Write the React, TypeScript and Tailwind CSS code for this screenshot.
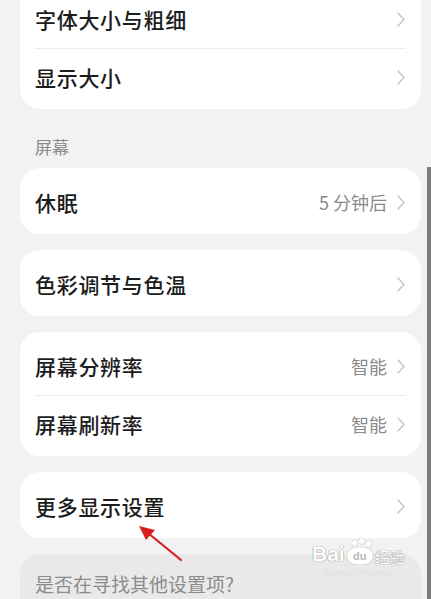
import React from 'react';

type Row = { label: string; value?: string };

const Chevron = () => (
  <svg width="8" height="15" viewBox="0 0 8 15" className="shrink-0">
    <path d="M1 1 L7 7.5 L1 14" fill="none" stroke="#c2c4c4" strokeWidth="1.4" strokeLinecap="round" strokeLinejoin="round" />
  </svg>
);

const Card = ({ rows }: { rows: Row[] }) => (
  <div className="bg-white rounded-[20px] pt-[6px] pb-[3px]">
    {rows.map((row, i) => (
      <div key={row.label}>
        {i > 0 && <div className="mx-[15px] h-px bg-[#ececec]" />}
        <div className="h-[57px] flex items-center pl-[15px] pr-[16px]">
          <span className="flex-1 text-[21px] font-medium text-[#1c1c1c] tracking-[0.7px]">{row.label}</span>
          {row.value && <span className="text-[18px] text-[#8a8a8a] mr-[10px]">{row.value}</span>}
          <Chevron />
        </div>
      </div>
    ))}
  </div>
);

const outline = '0 0 1px #8a8a8a, 0 0 1px #8a8a8a';

const App = () => {
  return (
    <div
      className="relative w-[431px] h-[599px] overflow-hidden bg-[#f1f2f1]"
      style={{ fontFamily: '"Noto Sans CJK SC", "Noto Sans", sans-serif' }}
    >
      <div className="px-[20px] pr-[10px] -mt-[15px] w-[431px] box-border">
        <Card rows={[{ label: '字体大小与粗细' }, { label: '显示大小' }]} />

        <div className="h-[59px] flex items-end pb-[9px] pl-[15px]">
          <span className="text-[17px] text-[#8a8a8a]">屏幕</span>
        </div>

        <div className="flex flex-col gap-[16px]">
          <Card rows={[{ label: '休眠', value: '5 分钟后' }]} />
          <Card rows={[{ label: '色彩调节与色温' }]} />
          <Card rows={[{ label: '屏幕分辨率', value: '智能' }, { label: '屏幕刷新率', value: '智能' }]} />
          <Card rows={[{ label: '更多显示设置' }]} />
          <div className="bg-[#e8e9e8] rounded-t-[20px] h-[80px] pl-[15px] pt-[16px]">
            <span className="text-[19px] text-[#8c8c8c]">是否在寻找其他设置项?</span>
          </div>
        </div>
      </div>

      {/* scrollbar */}
      <div className="absolute right-0 top-[167px] w-[4px] h-[432px] bg-[#7d7d7d]" />

      {/* red annotation arrow */}
      <svg className="absolute left-0 top-0" width="431" height="599" viewBox="0 0 431 599">
        <line x1="181" y1="560" x2="148" y2="533" stroke="#d81e1e" strokeWidth="2.2" strokeLinecap="round" />
        <polygon points="139,526 155,530 146,540" fill="#d81e1e" />
      </svg>

      {/* watermark */}
      <div className="absolute left-[312px] top-[540px] flex flex-col items-center">
        <div className="flex items-end">
          <span className="text-[21px] font-bold text-white leading-none" style={{ fontFamily: '"Liberation Sans", sans-serif', textShadow: outline }}>Bai</span>
          <div className="relative ml-[2px] w-[26px] h-[24px]">
            <span className="absolute left-[5px] top-0 w-[5px] h-[6px] rounded-full bg-white" style={{ boxShadow: '0 0 1px #8a8a8a' }} />
            <span className="absolute left-[12px] top-[-2px] w-[5px] h-[6px] rounded-full bg-white" style={{ boxShadow: '0 0 1px #8a8a8a' }} />
            <span className="absolute left-[19px] top-[1px] w-[5px] h-[6px] rounded-full bg-white" style={{ boxShadow: '0 0 1px #8a8a8a' }} />
            <span className="absolute left-0 bottom-0 w-[26px] h-[16px] rounded-full bg-white text-[11px] font-bold text-[#b8b8b8] flex items-center justify-center leading-none" style={{ fontFamily: '"Liberation Sans", sans-serif', boxShadow: '0 0 1px #8a8a8a' }}>du</span>
          </div>
          <span className="ml-[2px] text-[15px] text-white leading-none" style={{ textShadow: outline }}>经验</span>
        </div>
        <span className="text-[9px] text-white leading-none mt-[4px]" style={{ fontFamily: '"Liberation Serif", serif', textShadow: '0 0 1px #a0a0a0' }}>jingyan.baidu.com</span>
      </div>
    </div>
  );
};

export default App;
